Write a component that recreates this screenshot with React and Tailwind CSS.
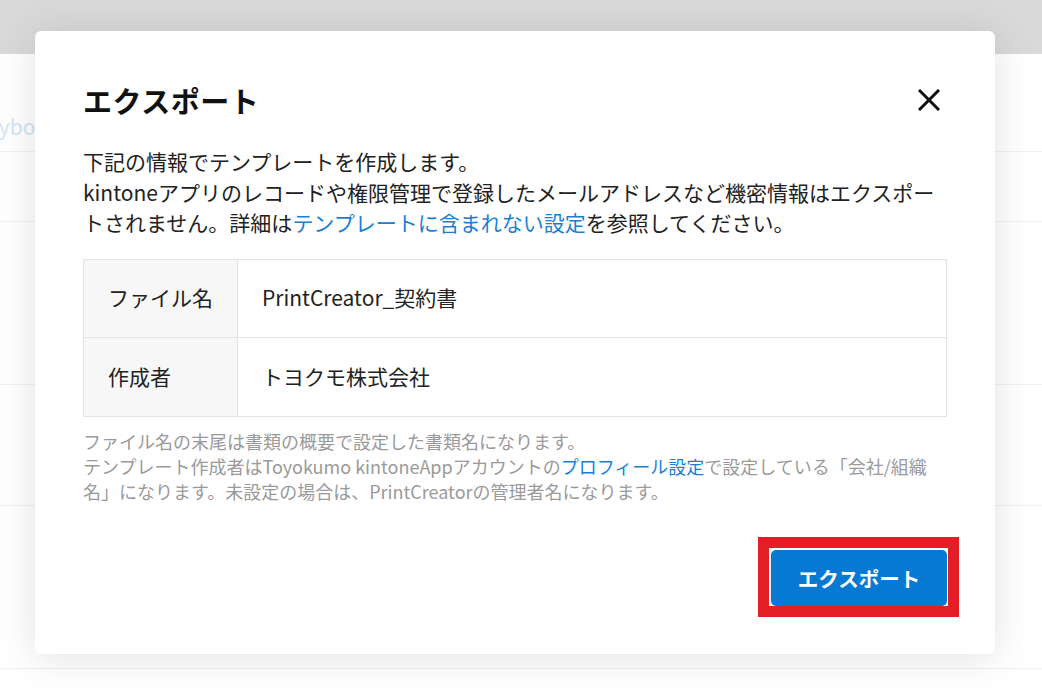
import React from "react";

export default function App() {
  const font = { fontFamily: '"Noto Sans CJK JP", "Noto Sans", sans-serif' };
  return (
    <div
      className="relative w-[1042px] h-[696px] overflow-hidden bg-white"
      style={font}
    >
      {/* background page */}
      <div className="flex flex-col">
        <div className="h-[54px] bg-[#d9d9d9]" />
        <div className="h-[98px] border-b border-[#f2f2f2] flex items-end pb-[10px]">
          <span className="ml-[-12px] text-[21px] leading-[30px] text-[#d3e5f5]">cybozu.com</span>
        </div>
        <div className="h-[70px] border-b border-[#f2f2f2]" />
        <div className="h-[163px] border-b border-[#f2f2f2]" />
        <div className="h-[121px] border-b border-[#f2f2f2]" />
        <div className="h-[163px] border-b border-[#f2f2f2]" />
      </div>

      {/* modal */}
      <div className="absolute left-[35px] top-[31px] w-[960px] h-[623px] bg-white rounded-[6px] shadow-[0_4px_40px_rgba(0,0,0,0.12)] px-[48px] pt-[47px] flex flex-col">
        <div className="h-[44px] flex items-center justify-between">
          <h2 className="text-[29px] font-bold text-[#111] leading-none tracking-[0.5px]">エクスポート</h2>
          <button className="w-[28px] h-[28px] mr-[4px] flex items-center justify-center">
            <svg width="22" height="22" viewBox="0 0 22 22">
              <path d="M2 2 L20 20 M20 2 L2 20" stroke="#111" strokeWidth="3" strokeLinecap="square" />
            </svg>
          </button>
        </div>

        <p className="mt-[24px] text-[21px] leading-[30.5px] text-[#222]">
          下記の情報でテンプレートを作成します。
          <br />
          kintoneアプリのレコードや権限管理で登録したメールアドレスなど機密情報はエクスポートされません。詳細は
          <a className="text-[#1a7fd4]">テンプレートに含まれない設定</a>
          を参照してください。
        </p>

        <div className="mt-[21px] border border-[#e3e3e3] text-[21px] text-[#222]">
          <div className="flex h-[78px] border-b border-[#e3e3e3]">
            <div className="w-[154px] bg-[#f7f7f7] border-r border-[#e3e3e3] flex items-center pl-[24px]">ファイル名</div>
            <div className="flex-1 flex items-center pl-[24px]">PrintCreator_契約書</div>
          </div>
          <div className="flex h-[78px]">
            <div className="w-[154px] bg-[#f7f7f7] border-r border-[#e3e3e3] flex items-center pl-[24px]">作成者</div>
            <div className="flex-1 flex items-center pl-[24px]">トヨクモ株式会社</div>
          </div>
        </div>

        <p className="mt-[12px] text-[18px] leading-[25px] text-[#9a9a9a]">
          ファイル名の末尾は書類の概要で設定した書類名になります。
          <br />
          テンプレート作成者はToyokumo kintoneAppアカウントの
          <a className="text-[#1a7fd4]">プロフィール設定</a>
          で設定している「会社/組織名」になります。未設定の場合は、PrintCreatorの管理者名になります。
        </p>

        <div className="mt-auto mb-[48px] flex justify-end">
          <div className="relative">
            <button className="w-[176px] h-[56px] rounded-[5px] bg-[#0679d3] text-white text-[20.5px] font-bold">
              エクスポート
            </button>
            <div className="absolute left-[-13px] right-[-12px] top-[-13px] bottom-[-11px] border-[11px] border-[#e31e24] pointer-events-none" />
          </div>
        </div>
      </div>
    </div>
  );
}
